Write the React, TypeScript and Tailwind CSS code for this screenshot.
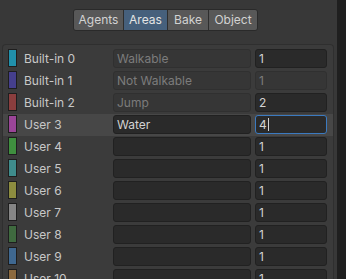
import React from "react";

type Row = { label: string; color: string; name: string; value: string; builtin: boolean; valueDisabled?: boolean; focused?: boolean; highlight?: boolean };

const rows: Row[] = [
  { label: "Built-in 0", color: "#2190ab", name: "Walkable", value: "1", builtin: true },
  { label: "Built-in 1", color: "#453f8c", name: "Not Walkable", value: "1", builtin: true, valueDisabled: true },
  { label: "Built-in 2", color: "#8a3e3e", name: "Jump", value: "2", builtin: true },
  { label: "User 3", color: "#9a4598", name: "Water", value: "4", builtin: false, focused: true, highlight: true },
  { label: "User 4", color: "#3f8f3f", name: "", value: "1", builtin: false },
  { label: "User 5", color: "#3f8c8c", name: "", value: "1", builtin: false },
  { label: "User 6", color: "#8c8c3f", name: "", value: "1", builtin: false },
  { label: "User 7", color: "#858585", name: "", value: "1", builtin: false },
  { label: "User 8", color: "#3f6a3f", name: "", value: "1", builtin: false },
  { label: "User 9", color: "#3f6890", name: "", value: "1", builtin: false },
  { label: "User 10", color: "#8c6a3f", name: "", value: "1", builtin: false },
];

const tabs = ["Agents", "Areas", "Bake", "Object"];
const tabW = ["w-[49px]", "w-[44px]", "w-[41px]", "w-[49px]"];

export default function App() {
  return (
    <div
      className="w-[346px] h-[279px] bg-[#383838] flex overflow-hidden text-[12px]"
      style={{ fontFamily: "Inter, 'Noto Sans', sans-serif" }}
    >
      <div className="w-[337px] flex flex-col">
        <div className="h-[2px] flex">
          <div className="w-[195px] bg-[#282828]" />
          <div className="w-[105px] bg-[#3c3c3c]" />
          <div className="flex-1 bg-[#282828]" />
        </div>
        <div className="mt-[9px] flex ml-[73px]">
          <div className="flex h-[22px] rounded-[3px] border border-[#2a2a2a] overflow-hidden">
            {tabs.map((t, i) => (
              <div
                key={t}
                className={`${tabW[i]} flex items-center justify-center leading-none ${
                  i > 0 ? "border-l border-[#2e2e2e]" : ""
                } ${t === "Areas" ? "bg-[#46607c] text-[#e4e4e4]" : "bg-[#585858] text-[#d2d2d2]"}`}
              >
                {t}
              </div>
            ))}
          </div>
        </div>
        <div className="mt-[13px] ml-[2px] w-[332px] flex-1 border-t border-l border-r border-[#2f2f2f] rounded-t-[4px] bg-[#3b3b3b] pt-[3px]">
          {rows.map((r) => (
            <div
              key={r.label}
              className={`h-[22px] flex items-start pt-[1px] pl-[5px] ${r.highlight ? "bg-[#474747]" : ""}`}
            >
              <div
                className="w-[9px] h-[18px] border border-[#1e1e1e] shrink-0"
                style={{ backgroundColor: r.color }}
              />
              <div className="w-[96px] pl-[7px] h-[19px] flex items-center text-[#c8c8c8] leading-none">
                {r.label}
              </div>
              <div
                className={`w-[138px] h-[19px] rounded-[3px] border flex items-center px-[3px] leading-none ${
                  r.builtin
                    ? "bg-[#363636] border-[#303030] text-[#7c7c7c]"
                    : "bg-[#2a2a2a] border-[#212121] text-[#d2d2d2]"
                }`}
              >
                {r.name}
              </div>
              <div
                className={`ml-[4px] w-[72px] h-[19px] rounded-[3px] border flex items-center px-[3px] leading-none ${
                  r.focused
                    ? "bg-[#2a2a2a] border-[#3b7ac0] text-[#d2d2d2]"
                    : r.valueDisabled
                    ? "bg-[#363636] border-[#303030] text-[#7c7c7c]"
                    : "bg-[#2a2a2a] border-[#212121] text-[#d2d2d2]"
                }`}
              >
                {r.value}
                {r.focused && <span className="w-[1px] h-[13px] bg-[#d2d2d2] ml-[1px]" />}
              </div>
            </div>
          ))}
        </div>
      </div>
      <div className="w-[9px] bg-[#1f1f1f]" />
    </div>
  );
}
